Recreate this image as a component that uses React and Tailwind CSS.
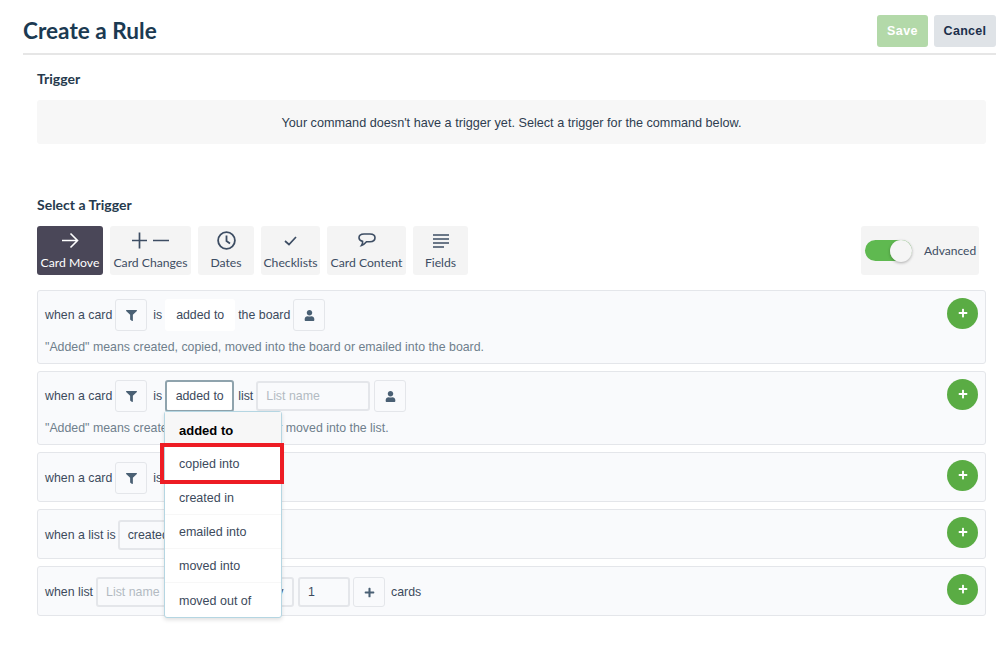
import { FaFilter, FaUser, FaPlus } from 'react-icons/fa'

const ink = 'text-[#3c4a5c]'

// tab icons are drawn by hand, the packages have nothing this thin
function ArrowIcon() {
  return (
    <svg width="18" height="17" viewBox="0 0 18 17" fill="none" stroke="currentColor" strokeWidth="1.6">
      <path d="M1 8.5h15M9.5 1.500l7 7-7 7" />
    </svg>
  )
}

function PlusMinusIcon() {
  return (
    <svg width="37" height="17" viewBox="0 0 37 17" fill="none" stroke="currentColor" strokeWidth="1.7">
      <path d="M0 8.5h15M7.500 0.500v16M21 8.500h16" />
    </svg>
  )
}

function ClockIcon() {
  return (
    <svg width="19" height="19" viewBox="0 0 19 19" fill="none" stroke="currentColor" strokeWidth="1.800">
      <circle cx="9.500" cy="9.500" r="8.400" />
      <path d="M9.500 4.500v5.500l3.500 2.500" />
    </svg>
  )
}

function CheckIcon() {
  return (
    <svg width="13" height="10" viewBox="0 0 13 10" fill="none" stroke="currentColor" strokeWidth="1.700">
      <path d="M1 5l4 3.500L12 1" />
    </svg>
  )
}

function BubbleIcon() {
  return (
    <svg width="18" height="15" viewBox="0 0 18 15" fill="none" stroke="currentColor" strokeWidth="1.600">
      <path d="M6 1h6c2.800 0 5 1.500 5 3.800s-2 3.900-5 3.900H8.500c-1.400 1.600-3.200 3.300-5 3.800.9-1.300 1.300-2.700 1.100-4.100C2.500 7.900 1 6.600 1 4.800 1 2.500 3.200 1 6 1z" />
    </svg>
  )
}

function LinesIcon() {
  return (
    <svg width="16" height="14" viewBox="0 0 16 14" fill="none" stroke="currentColor" strokeWidth="1.500">
      <path d="M0 1h16M0 5h16M0 9h16M0 13h11" />
    </svg>
  )
}

const tabs = [
  { label: 'Card Move', icon: <ArrowIcon />, width: 'w-[66px]', active: true },
  { label: 'Card Changes', icon: <PlusMinusIcon />, width: 'w-[81px]' },
  { label: 'Dates', icon: <ClockIcon />, width: 'w-[56px]' },
  { label: 'Checklists', icon: <CheckIcon />, width: 'w-[59px]' },
  { label: 'Card Content', icon: <BubbleIcon />, width: 'w-[79px]' },
  { label: 'Fields', icon: <LinesIcon />, width: 'w-[55px]' },
]

function TriggerTab({ label, icon, width, active }) {
  const tone = active ? 'bg-[#4a4758] text-white' : 'bg-[#f4f4f4] text-[#3d4d63]'
  return (
    <div className={`flex h-[49px] flex-col items-center rounded-[3px] ${width} ${tone}`}>
      <div className="flex h-[29px] items-center justify-center">{icon}</div>
      <span className="whitespace-nowrap text-[12.2px] leading-[16px]">{label}</span>
    </div>
  )
}

function IconButton({ icon: Icon, size = 11 }) {
  return (
    <div className="flex h-8 w-8 shrink-0 items-center justify-center rounded-[3px] border border-[#e4e6ea] text-[#4a6074]">
      <Icon size={size} />
    </div>
  )
}

function AddButton({ tall }) {
  return (
    <div className={`flex h-[31px] w-[31px] shrink-0 items-center justify-center rounded-full bg-[#5aac44] text-white ${tall ? 'mt-[-1.5px]' : 'mt-[-2.5px]'}`}>
      <FaPlus size={10} />
    </div>
  )
}

function Rule({ hint, children, tall }) {
  return (
    <div className={`flex items-start justify-between rounded-[3px] border border-[#e4e6ea] bg-[#f9fafc] pl-[7px] pr-[7px] ${tall ? 'h-[74px] pt-2' : 'h-[50px] pt-[9px]'}`}>
      <div>
        <div className={`flex h-8 items-center whitespace-nowrap text-[12.35px] ${ink}`}>{children}</div>
        {hint && <div className="mt-[7px] h-[18px] whitespace-nowrap text-[12.35px] leading-[18px] text-[#6f7f8c]">{hint}</div>}
      </div>
      <AddButton tall={tall} />
    </div>
  )
}

function TextField({ children, width, placeholder }) {
  const tone = placeholder ? 'text-[#b3bac2]' : ink
  return (
    <div className={`flex h-[30px] items-center rounded-[3px] border-2 border-[#e4e6ea] pl-[8px] ${width} ${tone}`}>
      {children}
    </div>
  )
}

const options = ['copied into', 'created in', 'emailed into', 'moved into', 'moved out of']

export default function App() {
  return (
    <div className="relative h-[660px] w-[999px] overflow-hidden bg-white pl-[23px] pr-[3px] font-['Liberation_Sans',sans-serif]">
      <header className="flex h-[55px] items-start justify-between border-b-2 border-[#e6e6e6] pt-[15px]">
        <h1 className="font-['Lato',sans-serif] text-[22.6px] font-bold leading-[32px] text-[#1b3a52]">Create a Rule</h1>
        <div className="flex gap-[6px]">
          <button className="h-8 w-[51px] rounded-[3px] bg-[#b3d9a9] text-[12.5px] font-bold tracking-[0.4px] text-white">Save</button>
          <button className="h-8 w-[62px] rounded-[3px] bg-[#dfe3e7] text-[12.5px] font-bold tracking-[0.3px] text-[#1b2f4b]">Cancel</button>
        </div>
      </header>

      <main className="ml-[14px] mr-[10px]">
        <h2 className="mt-[14px] font-['Lato',sans-serif] text-[14px] font-bold leading-[20px] text-[#263a4d]">Trigger</h2>
        <div className="mt-[11px] flex h-[44px] items-center justify-center rounded-[3px] bg-[#f7f7f7] pt-[2px] text-[12.66px] text-[#2e3d50]">
          Your command doesn't have a trigger yet. Select a trigger for the command below.
        </div>

        <h2 className="mt-[51px] font-['Lato',sans-serif] text-[14px] font-bold leading-[20px] text-[#263a4d]">Select a Trigger</h2>
        <div className="mt-[11px] flex justify-between pr-[7px] font-['Lato',sans-serif]">
          <div className="flex gap-[7px]">
            {tabs.map((tab) => (
              <TriggerTab key={tab.label} {...tab} />
            ))}
          </div>
          <div className="flex h-[49px] w-[118px] items-center rounded-[3px] bg-[#f4f4f4] pl-1">
            <div className="flex h-[21px] w-[47px] items-center justify-end rounded-full bg-[#5fb950]">
              <div className="h-[22px] w-[22px] rounded-full bg-[#f5f5f5] shadow-[0_1px_3px_rgba(0,0,0,0.3)]" />
            </div>
            <span className="ml-[12px] text-[12px] text-[#3d4d63]">Advanced</span>
          </div>
        </div>

        <div className="mt-[15px] flex flex-col gap-[7px]">
          <Rule tall hint={'"Added" means created, copied, moved into the board or emailed into the board.'}>
            <span>when a card</span>
            <div className="ml-[3px]"><IconButton icon={FaFilter} /></div>
            <span className="ml-[6px]">is</span>
            <div className="ml-[3px] flex h-8 w-[70px] items-center justify-center rounded-[3px] bg-white">added to</div>
            <span className="ml-[3px]">the board</span>
            <div className="ml-[3px]"><IconButton icon={FaUser} /></div>
          </Rule>

          <Rule tall hint={'"Added" means created, copied, emailed or moved into the list.'}>
            <span>when a card</span>
            <div className="ml-[3px]"><IconButton icon={FaFilter} /></div>
            <span className="ml-[6px]">is</span>
            <div className="ml-[3px] flex h-8 w-[69px] items-center justify-center rounded-[3px] border-2 border-[#8fa3ad] bg-white">added to</div>
            <span className="ml-[4px]">list</span>
            <div className="ml-[3px]"><TextField width="w-[114px]" placeholder>List name</TextField></div>
            <div className="ml-[4px]"><IconButton icon={FaUser} /></div>
          </Rule>

          <Rule>
            <span>when a card</span>
            <div className="ml-[3px]"><IconButton icon={FaFilter} /></div>
            <span className="ml-[6px]">is</span>
          </Rule>

          <Rule>
            <span>when a list is</span>
            <div className="ml-[2px]"><TextField width="w-[90px]">created</TextField></div>
          </Rule>

          <Rule>
            <span>when list</span>
            <div className="ml-[3px]"><TextField width="w-[100px]" placeholder>List name</TextField></div>
            <div className="ml-[39px]"><TextField width="w-[59px]">exactly</TextField></div>
            <div className="ml-[4px]"><TextField width="w-[52px]">1</TextField></div>
            <div className="ml-[3px] flex h-[30px] w-8 items-center justify-center rounded-[3px] border border-[#e4e6ea] text-[#4a6074]"><FaPlus size={11} /></div>
            <span className="ml-[6px]">cards</span>
          </Rule>
        </div>
      </main>

      {/* open dropdown over the second rule */}
      <div className="absolute left-[164px] top-[411px] w-[118px] rounded-[3px] border border-[#b5d6e2] bg-white text-[12.5px] shadow-[0_2px_4px_rgba(0,0,0,0.12)]">
        <div className="flex h-[35px] items-center bg-[#f7f7f7] pl-[14px] pt-[2px] text-[13px] font-bold text-black">added to</div>
        {options.map((option) => (
          <div key={option} className={`flex h-[34px] items-center border-b border-[#f7f7f7] pl-[14px] pt-[2px] last:border-b-0 ${ink}`}>
            {option}
          </div>
        ))}
      </div>

      {/* red highlight added on top of the screenshot */}
      <div className="absolute left-[160px] top-[443px] h-[41px] w-[124px] border-4 border-[#ed1c24]" />
    </div>
  )
}
